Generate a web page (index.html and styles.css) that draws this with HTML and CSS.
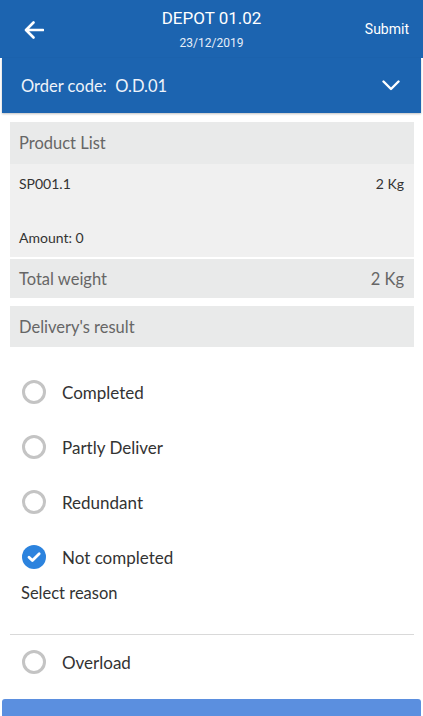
FILE: index.html
```html
<!DOCTYPE html>
<html>
<head>
<meta charset="utf-8">
<link rel="stylesheet" href="styles.css">
</head>
<body>
<div class="app">
  <header class="topbar">
    <svg class="back" width="20" height="18" viewBox="0 0 20 18"><path d="M19 9H2.5M9.5 1.5L2 9l7.5 7.5" fill="none" stroke="#fff" stroke-width="2.6" stroke-linecap="round" stroke-linejoin="round"/></svg>
    <div class="titles">
      <div class="title">DEPOT 01.02</div>
      <div class="date">23/12/2019</div>
    </div>
    <div class="submit">Submit</div>
  </header>
  <div class="order">
    <span>Order code:&nbsp; O.D.01</span>
    <svg width="18" height="11" viewBox="0 0 18 11"><path d="M1.5 1.5L9 9l7.5-7.5" fill="none" stroke="#fff" stroke-width="2.4" stroke-linecap="round" stroke-linejoin="round"/></svg>
  </div>
  <section class="content">
    <div class="panel-head">Product List</div>
    <div class="product">
      <div class="row"><span>SP001.1</span><span>2 Kg</span></div>
      <div class="amount">Amount: 0</div>
    </div>
    <div class="panel-head total"><span>Total weight</span><span>2 Kg</span></div>
    <div class="panel-head result">Delivery's result</div>
  </section>
  <div class="options">
    <div class="opt"><span class="radio"></span>Completed</div>
    <div class="opt"><span class="radio"></span>Partly Deliver</div>
    <div class="opt"><span class="radio"></span>Redundant</div>
    <div class="opt"><span class="radio checked"><svg width="24" height="24" viewBox="0 0 24 24"><circle cx="12" cy="12" r="12" fill="#2c83de"/><path d="M7 12.2l3.4 3.4 6.8-6.8" fill="none" stroke="#fff" stroke-width="2.8" stroke-linecap="round" stroke-linejoin="round"/></svg></span>Not completed</div>
    <div class="reason">Select reason</div>
    <div class="divider"></div>
    <div class="opt last"><span class="radio"></span>Overload</div>
  </div>
  <div class="bottom-btn"></div>
</div>
</body>
</html>
```
FILE: styles.css
```css
* { box-sizing: border-box; }
html, body { margin: 0; padding: 0; background: #fff; }
body { font-family: "Lato", "Noto Sans", sans-serif; color: #333; }
.app { width: 423px; height: 716px; overflow: hidden; display: flex; flex-direction: column; }
.app > * { flex: none; }
.topbar {
  height: 58px; background: #1c64b0; color: #fff;
  display: grid; grid-template-columns: 1fr auto 1fr; align-items: center; padding: 0 14px;
  font-family: "Roboto", sans-serif;
}
.back { margin-top: 1px; margin-left: 10px; }
.titles { text-align: center; }
.title { font-size: 17px; line-height: 20px; margin-top: -1px; }
.date { font-size: 12px; line-height: 14px; margin-top: 8px; color: #e6eef8; }
.submit { font-size: 14px; justify-self: end; }
.order {
  margin: 0 2px; height: 55px; background: #1c64b0; color: #eef3fa;
  display: flex; align-items: center; justify-content: space-between;
  padding: 0 21px 0 19px; font-size: 16.5px;
  box-shadow: 0 1px 2px rgba(0,0,0,0.25);
}
.content { margin: 9px 9px 0 10px; }
.panel-head {
  background: #e9eaea; color: #666; font-size: 16.5px; height: 42px;
  display: flex; align-items: center; justify-content: space-between; padding: 0 10px 0 9px;
}
.product { background: #f0f0f0; height: 93px; padding: 11px 10px 0 9px; font-size: 14px; color: #333; }
.row { display: flex; justify-content: space-between; }
.amount { margin-top: 37px; }
.total { margin-top: 2px; height: 39px; }
.result { margin-top: 8px; height: 41px; }
.options { padding: 34px 9px 0 10px; }
.opt { display: flex; align-items: center; height: 22px; font-size: 17px; color: #333; margin-bottom: 33px; padding-left: 12px; }
.opt.last { margin-bottom: 0; }
.radio {
  width: 24px; height: 24px; border-radius: 50%; border: 3px solid #c4c4c4;
  margin-right: 16px; flex: none; display: flex;
}
.radio.checked { border: none; }
.opt:nth-child(4) { margin-bottom: 15px; }
.reason { font-size: 16.5px; padding-left: 11px; color: #333; line-height: 20px; }
.divider { height: 1px; background: #d9d9d9; margin: 31px 0 16px; }
.bottom-btn { margin: 26px 2px 0; height: 40px; background: #5b8fdf; border-radius: 3px 3px 0 0; }
```
